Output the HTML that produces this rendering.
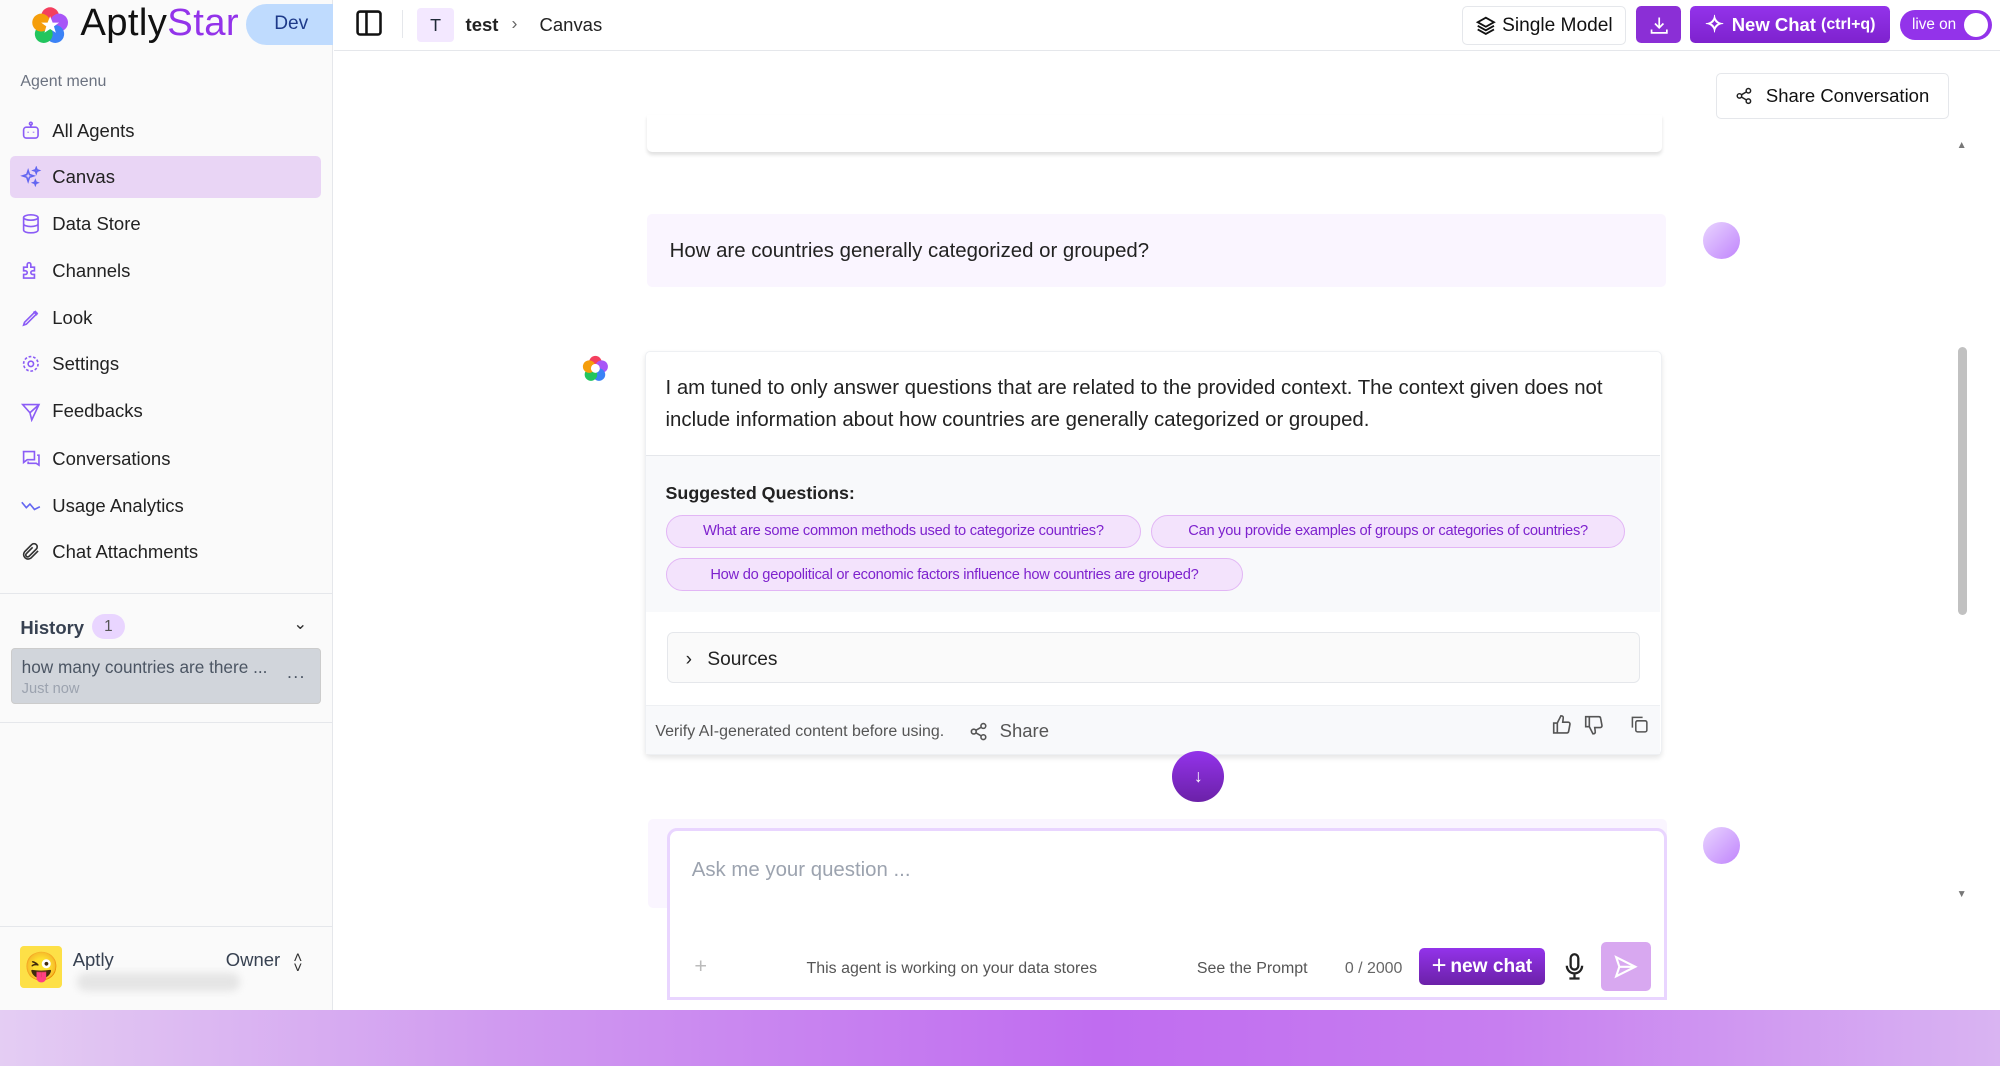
<!DOCTYPE html>
<html><head><meta charset="utf-8">
<style>
*{box-sizing:border-box;margin:0;padding:0}
html,body{width:2000px;height:1066px;overflow:hidden;background:#fff}
#r{zoom:1.2755;width:1568px;height:836px;position:relative;font-family:"Liberation Sans",sans-serif;color:#1f2937;overflow:hidden}
.a{position:absolute}
.side{left:0;top:0;width:261px;height:792px;background:#fafafa;border-right:1px solid #e5e7eb}
.mi{position:absolute;left:8px;width:244px;height:33px;display:flex;align-items:center;padding-left:8px;font-size:14.5px;color:#222}
.mi svg{width:17px;height:17px;margin-right:8px}
.btn{border-radius:4px;display:flex;align-items:center;justify-content:center;font-size:15px}
.chip{position:absolute;height:26px;border:1px solid #e2b6f5;background:#f3e3fc;border-radius:13px;color:#7e22ce;font-size:11.5px;letter-spacing:-0.2px;white-space:nowrap;overflow:hidden;display:flex;align-items:center;justify-content:center}
</style></head><body><div id="r">
<div class="a side">
 <div class="a" style="left:24px;top:5px;width:30px;height:30px">
  <svg viewBox="0 0 30 30" width="30" height="30"><circle cx="15" cy="8" r="7" fill="#f43f5e"/><circle cx="22" cy="13" r="7" fill="#a855f7"/><circle cx="19" cy="22" r="7" fill="#3b82f6"/><circle cx="10" cy="22" r="7" fill="#22c55e"/><circle cx="8" cy="13" r="7" fill="#f59e0b"/><path d="M15 8l2 5h5l-4 3 1.5 5L15 18l-4.5 3 1.5-5-4-3h5z" fill="#fff"/></svg>
 </div>
 <div class="a" style="left:63px;top:1px;font-size:30px;color:#111;letter-spacing:0.3px">Aptly<span style="color:#9333ea">Star</span></div>
 <div class="a" style="left:193px;top:3px;width:68px;height:32px;background:#bfdbfe;border-radius:16px 0 0 16px;color:#1e3a8a;font-size:15px;line-height:32px;padding-left:22px">Dev</div>
 <div class="a" style="left:16px;top:57px;font-size:12.5px;color:#6b7280">Agent menu</div>
 <div class="mi" style="top:86px"><svg viewBox="0 0 24 24" fill="none" stroke="#8b5cf6" stroke-width="1.8"><rect x="4" y="8" width="16" height="12" rx="3"/><circle cx="12" cy="4" r="1.5"/><path d="M12 5.5V8M9 13v1M15 13v1"/></svg>All Agents</div>
 <div class="mi" style="top:122px;background:#e9d5f5;border-radius:4px;"><svg viewBox="0 0 24 24" fill="none" stroke="#6366f1" stroke-width="1.8"><path d="M9 5l1.5 4.5L15 11l-4.5 1.5L9 17l-1.5-4.5L3 11l4.5-1.5zM18 2l.8 2.2L21 5l-2.2.8L18 8l-.8-2.2L15 5l2.2-.8zM17 16l.7 1.8 1.8.7-1.8.7L17 21l-.7-1.8-1.8-.7 1.8-.7z"/></svg>Canvas</div>
 <div class="mi" style="top:159px"><svg viewBox="0 0 24 24" fill="none" stroke="#8b5cf6" stroke-width="1.8"><ellipse cx="12" cy="5" rx="8" ry="3"/><path d="M4 5v14c0 1.7 3.6 3 8 3s8-1.3 8-3V5M4 12c0 1.7 3.6 3 8 3s8-1.3 8-3"/></svg>Data Store</div>
 <div class="mi" style="top:196px"><svg viewBox="0 0 24 24" fill="none" stroke="#8b5cf6" stroke-width="1.8"><path d="M4 8h4V5a2 2 0 014 0v3h4v4h-2a2 2 0 000 4h2v4H4v-4h2a2 2 0 000-4H4z"/></svg>Channels</div>
 <div class="mi" style="top:233px"><svg viewBox="0 0 24 24" fill="none" stroke="#8b5cf6" stroke-width="1.8"><path d="M4 20l3-1L19 7l-2-2L5 17zM15 5l4 4"/></svg>Look</div>
 <div class="mi" style="top:269px"><svg viewBox="0 0 24 24" fill="none" stroke="#8b5cf6" stroke-width="1.8"><circle cx="12" cy="12" r="3"/><circle cx="12" cy="12" r="8" stroke-dasharray="3 2"/></svg>Settings</div>
 <div class="mi" style="top:306px"><svg viewBox="0 0 24 24" fill="none" stroke="#8b5cf6" stroke-width="1.8"><path d="M3 4l18 0-8 17-2-8z M11 13L21 4"/></svg>Feedbacks</div>
 <div class="mi" style="top:343px"><svg viewBox="0 0 24 24" fill="none" stroke="#8b5cf6" stroke-width="1.8"><path d="M3 4h13v9H8l-4 3V4zM19 8h2v11l-3-2h-9v-2"/></svg>Conversations</div>
 <div class="mi" style="top:380px"><svg viewBox="0 0 24 24" fill="none" stroke="#6366f1" stroke-width="1.8"><path d="M2 8l5 6 4-4 5 6 6-3"/></svg>Usage Analytics</div>
 <div class="mi" style="top:416px"><svg viewBox="0 0 24 24" fill="none" stroke="#333" stroke-width="1.8"><path d="M20 11l-8 8a5 5 0 01-7-7l8-8a3.5 3.5 0 015 5l-8 8a2 2 0 01-3-3l7-7"/></svg>Chat Attachments</div>
 <div class="a" style="left:0;top:465px;width:261px;border-top:1px solid #e5e7eb"></div>
 <div class="a" style="left:16px;top:484px;font-size:14.5px;font-weight:bold;color:#374151">History</div>
 <div class="a" style="left:72px;top:481px;width:26px;height:20px;border-radius:10px;background:#e9d5ff;font-size:12px;text-align:center;line-height:20px;color:#555">1</div>
 <div class="a" style="left:230px;top:481px;font-size:13px;color:#333">⌄</div>
 <div class="a" style="left:9px;top:508px;width:243px;height:44px;background:#d1d5db;border-radius:3px;border:1px solid #ccc"></div>
 <div class="a" style="left:17px;top:515px;font-size:13.5px;color:#4b5563">how many countries are there ...</div>
 <div class="a" style="left:17px;top:534px;font-size:11.5px;color:#9ca3af">Just now</div>
 <div class="a" style="left:225px;top:519px;font-size:14px;color:#4b5563;letter-spacing:1px">...</div>
 <div class="a" style="left:0;top:566px;width:261px;border-top:1px solid #e5e7eb"></div>
 <div class="a" style="left:0;top:726px;width:261px;border-top:1px solid #e5e7eb"></div>
 <div class="a" style="left:16px;top:742px;width:33px;height:33px;background:#fde047;border-radius:3px;font-size:22px;text-align:center;line-height:33px">😜</div>
 <div class="a" style="left:57px;top:744px;font-size:14.5px;color:#374151">Aptly</div>
 <div class="a" style="left:60px;top:763px;width:128px;height:14px;background:#e5e5e5;border-radius:7px;filter:blur(3px)"></div>
 <div class="a" style="left:177px;top:744px;font-size:14.5px;color:#374151">Owner</div>
 <div class="a" style="left:230px;top:748px;font-size:12px;color:#333;line-height:8px">˄<br>˅</div>
</div>
<div class="a" style="left:262px;top:39px;width:1306px;border-top:1px solid #e5e7eb"></div>
<svg class="a" style="left:278px;top:7px" width="22" height="22" viewBox="0 0 22 22" fill="none" stroke="#111" stroke-width="2"><rect x="2" y="2" width="18" height="18" rx="2"/><path d="M9 2v18"/></svg>
<div class="a" style="left:315px;top:8px;height:22px;border-left:1px solid #e5e7eb"></div>
<div class="a" style="left:327px;top:6px;width:29px;height:27px;background:#f3e8ff;border-radius:3px;text-align:center;line-height:27px;font-size:14px">T</div>
<div class="a" style="left:365px;top:11px;font-size:14.5px;font-weight:bold;color:#222">test</div>
<div class="a" style="left:401px;top:10px;font-size:14px;color:#666">›</div>
<div class="a" style="left:423px;top:11px;font-size:14.5px;color:#222">Canvas</div>
<div class="a btn" style="left:1146px;top:5px;width:129px;height:30px;border:1px solid #e5e7eb;color:#111"><svg width="17" height="17" viewBox="0 0 24 24" fill="none" stroke="#111" stroke-width="2" style="margin-right:4px"><path d="M12 3l9 5-9 5-9-5zM3 12l9 5 9-5M3 16l9 5 9-5"/></svg>Single Model</div>
<div class="a btn" style="left:1283px;top:5px;width:35px;height:29px;background:#8b2fd6"><svg width="16" height="16" viewBox="0 0 24 24" fill="none" stroke="#fff" stroke-width="2"><path d="M12 3v12M7 10l5 5 5-5M3 17v4h18v-4"/></svg></div>
<div class="a btn" style="left:1325px;top:5px;width:157px;height:29px;background:linear-gradient(#9333ea,#7e22ce);color:#fff;font-weight:bold;font-size:14.5px"><span style="font-size:18px;margin-right:6px">✧</span>New Chat <span style="font-size:12.5px;margin-left:4px">(ctrl+q)</span></div>
<div class="a" style="left:1490px;top:8px;width:72px;height:23px;border-radius:12px;background:#9333ea;color:#fff;font-size:12px;line-height:23px;padding-left:9px">live on<div class="a" style="left:50px;top:2px;width:19px;height:19px;border-radius:50%;background:#fff"></div></div>
<div class="a btn" style="left:1345px;top:57px;width:183px;height:36px;border:1px solid #e5e7eb;font-size:14.5px;color:#111;border-radius:4px"><svg width="14" height="14" viewBox="0 0 24 24" fill="none" stroke="#222" stroke-width="2" style="margin-right:10px"><circle cx="18" cy="5" r="3"/><circle cx="6" cy="12" r="3"/><circle cx="18" cy="19" r="3"/><path d="M8.6 10.5l6.8-4M8.6 13.5l6.8 4"/></svg>Share Conversation</div>
<div class="a" style="left:1535px;top:272px;width:7px;height:210px;background:#c1c1c1;border-radius:4px"></div>
<div class="a" style="left:1534px;top:110px;font-size:8px;color:#777">▲</div>
<div class="a" style="left:1534px;top:697px;font-size:8px;color:#777">▼</div>
<div class="a" style="left:507px;top:90px;width:796px;height:29px;background:#fff;border-radius:0 0 4px 4px;box-shadow:0 2px 3px rgba(0,0,0,.12)"></div>
<div class="a" style="left:507px;top:168px;width:799px;height:57px;background:#faf5ff;border-radius:4px;font-size:16px;padding:20px 18px;color:#222">How are countries generally categorized or grouped?</div>
<div class="a" style="left:1335px;top:174px;width:29px;height:29px;border-radius:50%;background:linear-gradient(135deg,#e9d5ff,#c084fc)"></div>
<svg class="a" style="left:456px;top:278px" width="21" height="21" viewBox="0 0 30 30"><circle cx="15" cy="8" r="7" fill="#f43f5e"/><circle cx="22" cy="13" r="7" fill="#a855f7"/><circle cx="19" cy="22" r="7" fill="#3b82f6"/><circle cx="10" cy="22" r="7" fill="#22c55e"/><circle cx="8" cy="13" r="7" fill="#f59e0b"/><circle cx="15" cy="15" r="5" fill="#fff"/></svg>
<div class="a" style="left:506px;top:275px;width:797px;height:317px;background:#fff;border:1px solid #eef0f3;border-radius:4px;box-shadow:0 2px 4px rgba(0,0,0,.1)">
 <div class="a" style="left:15px;top:17px;width:775px;font-size:16px;line-height:24.5px;color:#222">I am tuned to only answer questions that are related to the provided context. The context given does not include information about how countries are generally categorized or grouped.</div>
 <div class="a" style="left:0;top:81px;width:795px;height:123px;background:#f8f9fb;border-top:1px solid #e5e7eb">
  <div class="a" style="left:15px;top:21px;font-size:14px;font-weight:bold;color:#222">Suggested Questions:</div>
  <div class="chip" style="left:15px;top:46px;width:373px">What are some common methods used to categorize countries?</div>
  <div class="chip" style="left:396px;top:46px;width:371px">Can you provide examples of groups or categories of countries?</div>
  <div class="chip" style="left:15px;top:80px;width:453px">How do geopolitical or economic factors influence how countries are grouped?</div>
 </div>
 <div class="a" style="left:16px;top:220px;width:763px;height:40px;border:1px solid #e5e7eb;border-radius:5px;background:#fafafa;font-size:15px;padding:12px 0 0 14px;color:#222"><span style="margin-right:12px">›</span>Sources</div>
 <div class="a" style="left:0;top:277px;width:795px;height:38px;background:#f8f9fb;border-top:1px solid #eef0f3">
  <div class="a" style="left:7px;top:13px;font-size:12.5px;color:#555">Verify AI-generated content before using.</div>
  <div class="a" style="left:253px;top:11px;font-size:14.5px;color:#555;display:flex;align-items:center"><svg width="15" height="15" viewBox="0 0 24 24" fill="none" stroke="#555" stroke-width="2" style="margin-right:9px"><circle cx="18" cy="5" r="3"/><circle cx="6" cy="12" r="3"/><circle cx="18" cy="19" r="3"/><path d="M8.6 10.5l6.8-4M8.6 13.5l6.8 4"/></svg>Share</div>
  <svg class="a" style="left:709px;top:6px" width="17" height="17" viewBox="0 0 24 24" fill="none" stroke="#555" stroke-width="1.8"><path d="M7 10v11H3V10zM7 10l4-8c2 0 3 1 2.5 3L13 9h6a2 2 0 012 2.3l-1.5 8A2 2 0 0117.5 21H7"/></svg>
  <svg class="a" style="left:734px;top:6px" width="17" height="17" viewBox="0 0 24 24" fill="none" stroke="#555" stroke-width="1.8"><path d="M7 14V3H3v11zM7 14l4 8c2 0 3-1 2.5-3L13 15h6a2 2 0 002-2.3l-1.5-8A2 2 0 0017.5 3H7"/></svg>
  <svg class="a" style="left:770px;top:6px" width="16" height="16" viewBox="0 0 24 24" fill="none" stroke="#555" stroke-width="1.8"><rect x="8" y="8" width="13" height="13" rx="2"/><path d="M4 16V4h12"/></svg>
 </div>
</div>
<div class="a" style="left:919px;top:589px;width:41px;height:40px;border-radius:50%;background:linear-gradient(#9333ea,#6b21a8);color:#fff;text-align:center;line-height:40px;font-size:14px">↓</div>
<div class="a" style="left:508px;top:642px;width:799px;height:70px;background:#faf5ff;border-radius:4px"></div>
<div class="a" style="left:1335px;top:648px;width:29px;height:29px;border-radius:50%;background:linear-gradient(135deg,#e9d5ff,#c084fc)"></div>
<div class="a" style="left:523px;top:649px;width:784px;height:135px;background:#fff;border:3px solid #e9d5ff;border-radius:8px 8px 0 0">
 <div class="a" style="left:17px;top:22px;font-size:16px;color:#9ca3af">Ask me your question ...</div>
 <div class="a" style="left:19px;top:96px;font-size:17px;color:#bbb">+</div>
 <div class="a" style="left:107px;top:101px;font-size:12.5px;color:#555">This agent is working on your data stores</div>
 <div class="a" style="left:413px;top:101px;font-size:12.5px;color:#555">See the Prompt</div>
 <div class="a" style="left:529px;top:101px;font-size:12.5px;color:#666">0 / 2000</div>
 <div class="a btn" style="left:587px;top:92px;width:99px;height:29px;background:linear-gradient(#9333ea,#6b21a8);color:#fff;font-weight:bold;font-size:15px"><span style="font-size:20px;margin-right:3px;font-weight:normal">+</span>new chat</div>
 <svg class="a" style="left:700px;top:96px" width="18" height="22" viewBox="0 0 18 22" fill="none" stroke="#222" stroke-width="1.8"><rect x="6" y="1" width="6" height="12" rx="3"/><path d="M3 10a6 6 0 0012 0M9 16v4M5 20h8"/></svg>
 <div class="a btn" style="left:730px;top:87px;width:39px;height:39px;background:#d8a8f0"><svg width="20" height="20" viewBox="0 0 24 24" fill="none" stroke="#fff" stroke-width="2"><path d="M3 3l18 9-18 9 3-9zM6 12h15"/></svg></div>
</div>
<div class="a" style="left:0;top:792px;width:1568px;height:44px;background:linear-gradient(90deg,#e4cdf3 0%,#d09af0 25%,#c06cf0 55%,#c77ef0 75%,#d9b4f2 100%)"></div>
</div></body></html>
